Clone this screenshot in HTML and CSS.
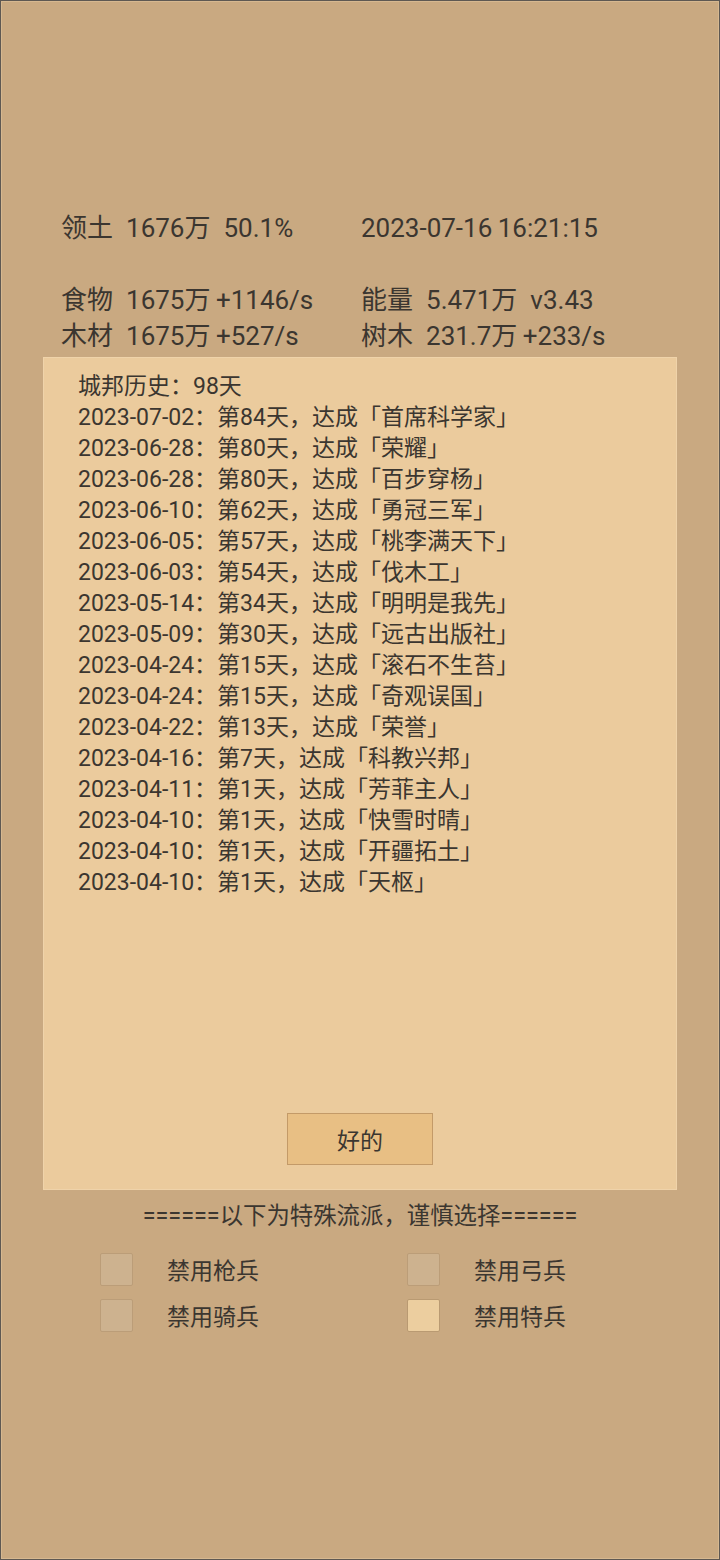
FILE: index.html
```html
<!DOCTYPE html>
<html>
<head>
  <meta charset="UTF-8">
  <title>城邦</title>
  <link rel="stylesheet" href="styles.css">
</head>
<body>
  <div class="screen">
    <div class="stats">
      <div class="stat"><span class="label">领土</span><span class="value">1676万</span>50.1%</div>
      <div class="stat">2023-07-16 16:21:15</div>
      <div class="stat"></div>
      <div class="stat"></div>
      <div class="stat"><span class="label">食物</span>1675万 +1146/s</div>
      <div class="stat"><span class="label">能量</span><span class="value">5.471万</span>v3.43</div>
      <div class="stat"><span class="label">木材</span>1675万 +527/s</div>
      <div class="stat"><span class="label">树木</span>231.7万 +233/s</div>
    </div>

    <div class="history">
      <div class="history-list">
        <div>城邦历史：98天</div>
        <div>2023-07-02：第84天，达成「首席科学家」</div>
        <div>2023-06-28：第80天，达成「荣耀」</div>
        <div>2023-06-28：第80天，达成「百步穿杨」</div>
        <div>2023-06-10：第62天，达成「勇冠三军」</div>
        <div>2023-06-05：第57天，达成「桃李满天下」</div>
        <div>2023-06-03：第54天，达成「伐木工」</div>
        <div>2023-05-14：第34天，达成「明明是我先」</div>
        <div>2023-05-09：第30天，达成「远古出版社」</div>
        <div>2023-04-24：第15天，达成「滚石不生苔」</div>
        <div>2023-04-24：第15天，达成「奇观误国」</div>
        <div>2023-04-22：第13天，达成「荣誉」</div>
        <div>2023-04-16：第7天，达成「科教兴邦」</div>
        <div>2023-04-11：第1天，达成「芳菲主人」</div>
        <div>2023-04-10：第1天，达成「快雪时晴」</div>
        <div>2023-04-10：第1天，达成「开疆拓土」</div>
        <div>2023-04-10：第1天，达成「天枢」</div>
      </div>
      <button class="ok-btn">好的</button>
    </div>

    <div class="warning">======以下为特殊流派，谨慎选择======</div>

    <div class="options">
      <label class="option"><span class="box"></span>禁用枪兵</label>
      <label class="option"><span class="box"></span>禁用弓兵</label>
      <label class="option"><span class="box"></span>禁用骑兵</label>
      <label class="option"><span class="box checked"></span>禁用特兵</label>
    </div>
  </div>
</body>
</html>
```

FILE: styles.css
```css
* {
  margin: 0;
  padding: 0;
  box-sizing: border-box;
}

body {
  font-family: Roboto, "Noto Sans CJK SC", sans-serif;
  background: #c9a981;
  color: #3b3630;
  text-spacing-trim: space-all;
}

.screen {
  height: 100vh;
  border: 1px solid #5e5852;
  box-shadow: inset 0 0 0 1px #d6b890;
  padding-top: 209px;
}

/* resource counters, two columns */
.stats {
  display: grid;
  grid-template-columns: 300px 300px;
  padding-left: 60px;
  font-size: 26px;
  line-height: 36px;
}

.stat {
  white-space: nowrap;
  height: 36px;
  word-spacing: -1px;
}

.label {
  margin-right: 13px;
}

.value {
  margin-right: 13px;
}

/* achievement log dialog */
.history {
  margin: 3px 0 0 42px;
  width: 634px;
  height: 833px;
  background: #ebcb9d;
  border: 1px solid #efd3aa;
  padding: 13px 0 24px 34px;
  display: flex;
  flex-direction: column;
}

.history-list {
  font-size: 23px;
  line-height: 31px;
  flex: 1;
}

.ok-btn {
  align-self: center;
  margin-left: -34px;
  width: 146px;
  height: 52px;
  background: #e8bf84;
  border: 1px solid #c39a68;
  color: #3b3630;
  font-family: inherit;
  font-size: 23px;
  cursor: pointer;
}

.warning {
  text-align: center;
  font-size: 23.4px;
  line-height: 30px;
  margin-top: 11px;
}

.options {
  display: grid;
  grid-template-columns: 307px 307px;
  row-gap: 14px;
  padding-left: 99px;
  margin-top: 22px;
}

.option {
  display: flex;
  align-items: center;
  font-size: 23px;
  height: 32px;
}

.box {
  width: 33px;
  height: 33px;
  border: 1px solid #bb9d78;
  border-radius: 2px;
  background: #cdb28f;
  margin-right: 34px;
}

.box.checked {
  background: #ecce9f;
  border-color: #b99a72;
}
```
